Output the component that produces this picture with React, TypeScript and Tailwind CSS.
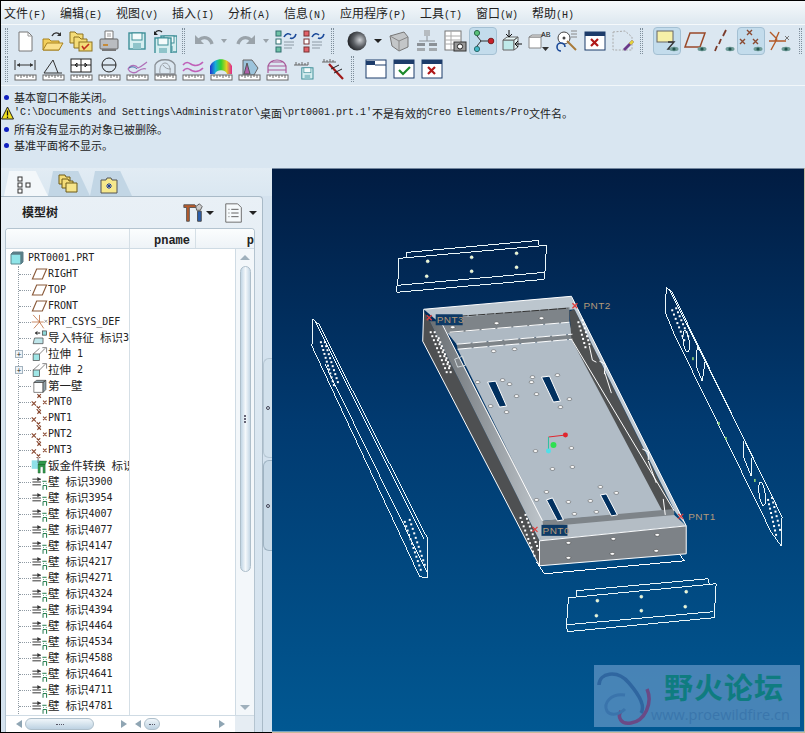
import React from "react";

const cjk = '"Noto Sans CJK SC", "Liberation Sans", sans-serif';

// CJK and latin have different sizes in the original UI, so split the strings up
const Mix = ({ text, cjkClass = "text-[12px]", latinClass = "font-['Liberation_Mono',monospace]" }: { text: string; cjkClass?: string; latinClass?: string }) => {
  const parts = text.match(/[\u2E80-\u9FFF]+|[^\u2E80-\u9FFF]+/g) || [];
  return (
    <>
      {parts.map((p, i) =>
        /[\u2E80-\u9FFF]/.test(p) ? (
          <span key={i} className={`${cjkClass} font-['Noto_Sans_CJK_SC',sans-serif]`}>{p}</span>
        ) : (
          <span key={i} className={`text-[10px] whitespace-pre ${latinClass}`}>{p}</span>
        )
      )}
    </>
  );
};

const treeLatin = "font-['DejaVu_Sans_Mono',monospace]";

const Svg = ({ children, s = 24 }: { children: React.ReactNode; s?: number }) => (
  <svg width={s} height={s} viewBox="0 0 24 24" fill="none">{children}</svg>
);

const Eye = () => (
  <g>
    <ellipse cx="19" cy="20" rx="4.5" ry="2.2" fill="#6d9a96" />
    <circle cx="19" cy="20" r="1.6" fill="#24544f" />
  </g>
);

const Ruler = () => (
  <g>
    <rect x="2" y="18" width="21" height="5" fill="#fff" stroke="#666" />
    <path d="M5 18v2M8 18v3M11 18v2M14 18v3M17 18v2M20 18v3" stroke="#666" />
  </g>
);

const Floppy = ({ x = 0, y = 0 }: { x?: number; y?: number }) => (
  <g transform={`translate(${x} ${y})`}>
    <rect x="4" y="4" width="16" height="16" fill="#d6eef0" stroke="#3e8f98" strokeWidth="1.4" />
    <rect x="7" y="4" width="10" height="7" fill="#f4fbfb" stroke="#3e8f98" />
    <rect x="8" y="14" width="8" height="6" fill="#8fc4ca" />
  </g>
);

const Folder = ({ x = 0, y = 0, w = 16 }: { x?: number; y?: number; w?: number }) => (
  <path d={`M${x} ${y + 2}h5l2 2h${w - 7}v9h-${w}z`} fill="#f4dc78" stroke="#8d7320" />
);

const icons: Record<string, React.ReactNode> = {
  page: <Svg><path d="M6 3h9l4 4v15H6z" fill="#fff" stroke="#777" /><path d="M15 3v4h4" stroke="#999" /></Svg>,
  open: <Svg><path d="M2 10h6l2 2h8v9H2z" fill="#f3cf5c" stroke="#a8821f" /><path d="M2 21l4-7h16l-4 7z" fill="#fae08c" stroke="#a8821f" /><path d="M11 7c2-4 6-4 8-1" stroke="#333" strokeWidth="1.4" /><path d="M20 3v4h-4z" fill="#333" /></Svg>,
  manage: <Svg><Folder x={1} y={1} w={13} /><Folder x={5} y={6} w={13} /><rect x="10" y="13" width="13" height="9" fill="#f4dc78" stroke="#8d7320" /><path d="M13 17l2 3 5-5" stroke="#c03020" strokeWidth="1.6" /></Svg>,
  print: <Svg><path d="M8 2h8v8H8z" fill="#fff" stroke="#777" /><path d="M10 5h4M10 7h4" stroke="#999" /><rect x="3" y="10" width="18" height="10" rx="1" fill="#b9bcc0" stroke="#666" /><rect x="6" y="15" width="5" height="2" fill="#c58b3a" /><path d="M5 20h14v2H5z" fill="#777" /></Svg>,
  save: <Svg><Floppy /></Svg>,
  saveas: <Svg><Floppy x={4} y={3} /><Floppy x={-2} y={5} /><path d="M2 4c2-3 5-3 7-1" stroke="#222" strokeWidth="1.3" /><path d="M1 2v4h4z" fill="#222" /></Svg>,
  undo: <Svg><path d="M7 11c4-4 11-3 13 4" stroke="#9aa3aa" strokeWidth="3.4" /><path d="M3 6v9h9z" fill="#9aa3aa" /></Svg>,
  redo: <Svg><path d="M17 11c-4-4-11-3-13 4" stroke="#9aa3aa" strokeWidth="3.4" /><path d="M21 6v9h-9z" fill="#9aa3aa" /></Svg>,
  regen1: <Svg><rect x="2" y="2" width="5" height="5" fill="#6fc1a6" stroke="#2f6f6f" /><rect x="2" y="10" width="5" height="5" fill="#fff" stroke="#2f6f6f" /><rect x="2" y="18" width="5" height="5" fill="#6fc1a6" stroke="#2f6f6f" /><path d="M10 13h10M10 16h10M10 19h8" stroke="#8d9aa5" /><path d="M10 8c2-4 5-4 7-2M22 5c-1 4-4 5-6 4" stroke="#1b4a9a" strokeWidth="1.6" /></Svg>,
  regen2: <Svg><rect x="2" y="2" width="5" height="5" fill="#e2626a" stroke="#7a3030" /><rect x="2" y="10" width="5" height="5" fill="#fff" stroke="#7a3030" /><rect x="2" y="18" width="5" height="5" fill="#e2626a" stroke="#7a3030" /><path d="M10 13h10M10 16h10M10 19h8" stroke="#8d9aa5" /><path d="M10 8c2-4 5-4 7-2M22 5c-1 4-4 5-6 4" stroke="#1b4a9a" strokeWidth="1.6" /></Svg>,
  sphere: <Svg><defs><radialGradient id="sph" cx="0.65" cy="0.45" r="0.7"><stop offset="0" stopColor="#cfd2d6" /><stop offset="0.5" stopColor="#5b5f64" /><stop offset="1" stopColor="#16181b" /></radialGradient></defs><circle cx="12" cy="12" r="9.5" fill="url(#sph)" /></Svg>,
  viewbox: <Svg><path d="M3 7l14-4 4 5v10l-9 4-7-5z" fill="#c3c6c8" stroke="#777" /><path d="M3 7l9 5v10M12 12l9-4" stroke="#888" /></Svg>,
  layers: <Svg><rect x="9" y="1" width="6" height="6" fill="#b6bcc1" /><path d="M12 7v5M4 12h16" stroke="#8b9197" /><rect x="2" y="14" width="8" height="3" fill="#8b9197" /><rect x="14" y="14" width="8" height="3" fill="#8b9197" /><rect x="2" y="19" width="8" height="3" fill="#a3a9ae" /><rect x="14" y="19" width="8" height="3" fill="#a3a9ae" /></Svg>,
  table: <Svg><rect x="2" y="2" width="16" height="19" fill="#fff" stroke="#777" /><path d="M2 7h16M2 11h16M2 15h16M8 2v19" stroke="#aaa" /><rect x="11" y="13" width="12" height="9" fill="#999" stroke="#333" /><circle cx="17" cy="17.5" r="2.6" fill="#fff" stroke="#222" /></Svg>,
  nodes: <Svg><circle cx="6" cy="4" r="2.6" fill="#58c078" stroke="#2a6a4a" /><circle cx="6" cy="20" r="2.6" fill="#45b8c8" stroke="#2a6a6a" /><circle cx="20" cy="12" r="2.8" fill="#c8202a" stroke="#7a2020" /><path d="M6 7l4 5-4 5M10 12h7" stroke="#333" /></Svg>,
  extrude: <Svg><path d="M4 11h11v10H4z" fill="#bfeaea" stroke="#666" /><path d="M4 11l4-3h11l-4 3zM15 11l4-3v10l-4 3z" fill="#e6f6f6" stroke="#666" /><path d="M10 1v7M7 5l3 3 3-3M23 15h-7M19 12l-3 3 3 3" stroke="#111" /></Svg>,
  annot: <Svg><path d="M2 8h12v11H2z" fill="#fff" stroke="#888" /><path d="M2 8l3-2h12l-3 2z" fill="#eee" stroke="#888" /><text x="14" y="8" fontSize="8" fill="#222" fontFamily="Liberation Mono">AB</text><path d="M15 18h7l-3.500 4z" fill="#333" /></Svg>,
  find: <Svg><circle cx="9" cy="9" r="6" fill="#fff" stroke="#444" /><circle cx="9" cy="9" r="1.5" fill="#444" /><path d="M12 12l9 9" stroke="#a87a3a" strokeWidth="2" /><path d="M16 2h6M16 5h6M16 8h6" stroke="#888" /><path d="M6 22a4 4 0 1 1 4-4" stroke="#1b4a9a" strokeWidth="1.6" /></Svg>,
  winx: <Svg><rect x="2" y="3" width="20" height="18" fill="#fff" stroke="#1d3c6a" /><rect x="2" y="3" width="20" height="4" fill="#1d3c6a" /><path d="M8 10l7 7M15 10l-7 7" stroke="#b01818" strokeWidth="2.2" /></Svg>,
  brush: <Svg><path d="M2 3l12-1 7 6v13H2z" fill="none" stroke="#aaa" strokeDasharray="2 1.500" /><path d="M12 20l9-9 2 2-9 9z" fill="#6a3a8a" /><path d="M18 14l3-3 2 2-3 3z" fill="#e2d23a" /></Svg>,
  plane: <Svg><rect x="2" y="2" width="16" height="11" fill="#f6f0a8" stroke="#666" /><path d="M13 13h6l-6 7h6" stroke="#333" strokeWidth="1.4" /><Eye /></Svg>,
  planeoff: <Svg><path d="M7 4h15l-5 14H2z" stroke="#9a4a2a" strokeWidth="1.5" /><Eye /></Svg>,
  axis: <Svg><path d="M15 1l-3 6M10 10l-2 5M6 17l-2 5" stroke="#7a3a2a" strokeWidth="1.8" /><Eye /></Svg>,
  points: <Svg><path d="M8 1l5 5M13 1L8 6M1 10l5 5M6 10l-5 5M14 10l5 5M19 10l-5 5" stroke="#8a4a32" strokeWidth="1.400" /><Eye /></Svg>,
  csys: <Svg><path d="M3 3l7 7M12 3l-4 9M2 12h17M10 10l-6 11" stroke="#b45a28" strokeWidth="1.4" /><path d="M18 7l4 4M22 7l-4 4" stroke="#777" /><Eye /></Svg>,
  m1: <Svg><path d="M2 3v10M22 3v10M4 8h16" stroke="#333" /><path d="M4 8l3-2v4zM20 8l-3-2v4z" fill="#333" /><Ruler /></Svg>,
  m2: <Svg><path d="M12 3L3 16h18M12 3l5 13" stroke="#333" /><Ruler /></Svg>,
  m3: <Svg><rect x="2" y="2" width="20" height="13" fill="#fff" stroke="#222" /><path d="M2 8h20M12 2v13M6 8l2-2v4zM18 8l-2-2v4z" stroke="#222" /><Ruler /></Svg>,
  m4: <Svg><circle cx="12" cy="8" r="7" stroke="#222" /><path d="M5 8h14" stroke="#222" /><Ruler /></Svg>,
  m5: <Svg><path d="M3 12c3-5 8-4 10-1 3-1 6-4 9-6M3 12c2 4 7 5 10 2 3-2 6-3 8-2" stroke="#b070b8" strokeWidth="1.3" /><path d="M4 11c3-2 6-1 8 1" stroke="#3a6fa8" /><Ruler /></Svg>,
  m6: <Svg><path d="M2 17V8c3-7 17-7 20 0v9z" stroke="#8a9096" strokeWidth="1.3" /><path d="M7 16c-1-6 2-10 5-10s6 4 5 10M10 8c2 3 4 4 8 4" stroke="#9aa0a6" /><Ruler /></Svg>,
  m7: <Svg><path d="M2 8c4-5 7-1 10 0s6 1 10-3M2 14c4-5 7-1 10 0s6 1 10-3" stroke="#c060b8" strokeWidth="1.6" /><Ruler /></Svg>,
  m8: <Svg><defs><linearGradient id="rb" x1="0" x2="1"><stop offset="0" stopColor="#2030d0" /><stop offset="0.25" stopColor="#18b0d8" /><stop offset="0.5" stopColor="#30d030" /><stop offset="0.75" stopColor="#e0d020" /><stop offset="1" stopColor="#e02090" /></linearGradient></defs><path d="M1 17V9C5 0 19 0 23 9v8h-5c-1-5-11-5-12 0z" fill="url(#rb)" /><Ruler /></Svg>,
  m9: <Svg><path d="M6 3h9l6 8-4 7H6z" fill="#9cc4dc" stroke="#666" /><path d="M7 17l3-11 3 11z" fill="#b060a8" stroke="#555" /><Ruler /></Svg>,
  m10: <Svg><path d="M3 16V9c3-8 15-8 18 0v7M3 9h18M3 13h18M6 5h12" stroke="#a85898" strokeWidth="1.2" /><Ruler /></Svg>,
  m11: <Svg><path d="M1 8h14M3 5v3M6 6v2M9 5v3M12 6v2M15 5v3" stroke="#666" /><g transform="translate(6 8) scale(.7)"><Floppy /></g></Svg>,
  m12: <Svg><path d="M1 5h14M3 2v3M6 3v2M9 2v3M12 3v2" stroke="#666" /><path d="M8 7l14 15" stroke="#a01818" strokeWidth="2.2" /><path d="M10 12l8-4M13 16l8-4" stroke="#222" /></Svg>,
  w1: <Svg><rect x="2" y="3" width="20" height="18" fill="#fff" stroke="#1d3c6a" /><path d="M2 4h9v4H2z" fill="#1d3c6a" /><path d="M11 8h11" stroke="#1d3c6a" /></Svg>,
  w2: <Svg><rect x="2" y="3" width="20" height="18" fill="#fff" stroke="#1d3c6a" /><rect x="2" y="3" width="20" height="4" fill="#1d3c6a" /><path d="M7 13l4 4 7-7" stroke="#1a8a2a" strokeWidth="2.2" /></Svg>,
};

const Drop = () => <div className="w-3 flex justify-center"><div className="border-x-[3px] border-t-[4px] border-x-transparent border-t-[#9aa3aa]" /></div>;
const DarkDrop = ({ className = "" }: { className?: string }) => <div className={`border-x-[4px] border-t-[4px] border-x-transparent border-t-[#222] ${className}`} />;
const Grip = () => <div className="w-[3px] h-[26px] mx-[3px] border-x border-dotted border-[#7f8f9c]" />;

const Tool = ({ name, on }: { name: string; on?: boolean }) => (
  <div className={`w-7 h-7 flex items-center justify-center shrink-0 rounded-sm ${on ? "bg-[#c3dcec] border border-[#a4c0d3]" : ""}`}>{icons[name]}</div>
);

const menus = [
  { t: "文件(F)", w: "w-[56px]" },
  { t: "编辑(E)", w: "w-[56px]" },
  { t: "视图(V)", w: "w-[56px]" },
  { t: "插入(I)", w: "w-[56px]" },
  { t: "分析(A)", w: "w-[56px]" },
  { t: "信息(N)", w: "w-[56px]" },
  { t: "应用程序(P)", w: "w-[80px]" },
  { t: "工具(T)", w: "w-[56px]" },
  { t: "窗口(W)", w: "w-[56px]" },
  { t: "帮助(H)", w: "w-[56px]" },
];

const messages = [
  { kind: "info", t: "基本窗口不能关闭。" },
  { kind: "warn", t: "'C:\\Documents and Settings\\Administrator\\桌面\\prt0001.prt.1'不是有效的Creo Elements/Pro文件名。" },
  { kind: "info", t: "所有没有显示的对象已被删除。" },
  { kind: "info", t: "基准平面将不显示。" },
];

const PlaneIcon = () => <Svg s={18}><path d="M8 5h14l-6 14H2z" stroke="#8a5a3a" strokeWidth="1.6" /></Svg>;
const CsysIcon = () => <Svg s={18}><path d="M3 2l9 10M12 2v10M1 12h17M12 12l-8 9M12 12l6 9" stroke="#b45a28" /><path d="M19 9l4 4M23 9l-4 4" stroke="#777" /></Svg>;
const ImportIcon = () => <Svg s={18}><path d="M5 12h12v8H3z" fill="#bfe6ea" stroke="#444" /><rect x="16" y="2" width="6" height="6" fill="#8fd8d8" stroke="#444" /><path d="M13 5H7M9 3L6 5l3 2" stroke="#111" strokeWidth="1.4" /></Svg>;
const ExtrudeIcon = () => <Svg s={18}><rect x="3" y="12" width="9" height="9" fill="#9fe6e6" stroke="#444" /><path d="M12 12l8-8M16 3h6v7M3 12l9-8" stroke="#555" /></Svg>;
const SolidIcon = () => <Svg s={18}><path d="M4 7h13v14H4z" fill="#fff" stroke="#555" /><path d="M4 7l4-3h13l-4 3zM17 7l4-3v13l-4 4z" fill="#8ea0a8" stroke="#444" /></Svg>;
const PointsIcon = () => <Svg s={18}><path d="M9 1l5 5M14 1L9 6M1 11l6 6M7 11l-6 6M17 10l5 5M22 10l-5 5M8 18l5 5M13 18l-5 5" stroke="#8a4a32" strokeWidth="1.6" /></Svg>;
const SheetIcon = () => <Svg s={18}><path d="M1 4h12v12H1z" fill="#8fe0e8" /><path d="M10 10l2-5h10l-2 5zM10 10v12h3V13h4v9h3V10z" fill="#2f9a4a" stroke="#1c5c2c" strokeWidth=".6" /><path d="M10 0v8" stroke="#333" /></Svg>;
const WallIcon = () => <Svg s={18}><path d="M2 8h12M2 12h12M2 16h12" stroke="#333" strokeWidth="1.400" /><path d="M9 5l5 3-5 3z" fill="#333" /><path d="M16 11h6M17 14h1M21 14h1M17 17h5v6M17 17v6" stroke="#1f7a4a" strokeWidth="1.400" /></Svg>;

const walls = ["3900", "3954", "4007", "4077", "4147", "4217", "4271", "4324", "4394", "4464", "4534", "4588", "4641", "4711", "4781"];

const rows: { t: string; icon: React.ReactNode; plus?: boolean }[] = [
  { t: "RIGHT", icon: <PlaneIcon /> },
  { t: "TOP", icon: <PlaneIcon /> },
  { t: "FRONT", icon: <PlaneIcon /> },
  { t: "PRT_CSYS_DEF", icon: <CsysIcon /> },
  { t: "导入特征 标识39", icon: <ImportIcon /> },
  { t: "拉伸 1", icon: <ExtrudeIcon />, plus: true },
  { t: "拉伸 2", icon: <ExtrudeIcon />, plus: true },
  { t: "第一壁", icon: <SolidIcon /> },
  { t: "PNT0", icon: <PointsIcon /> },
  { t: "PNT1", icon: <PointsIcon /> },
  { t: "PNT2", icon: <PointsIcon /> },
  { t: "PNT3", icon: <PointsIcon /> },
  { t: "钣金件转换 标识", icon: <SheetIcon /> },
  ...walls.map((w) => ({ t: "壁 标识" + w, icon: <WallIcon /> })),
];

const ArrowL = () => <div className="border-y-[4px] border-r-[6px] border-y-transparent border-r-[#8fa5b3]" />;
const ArrowR = () => <div className="border-y-[4px] border-l-[6px] border-y-transparent border-l-[#8fa5b3]" />;

const line = (x1: number, y1: number, x2: number, y2: number, n: number) =>
  Array.from({ length: n }, (_, i) => [x1 + ((x2 - x1) * i) / (n - 1), y1 + ((y2 - y1) * i) / (n - 1)]);

const floorHoles = [[494, 352], [515, 350], [478, 383], [503, 381], [510, 385], [533, 378], [532, 383], [558, 376], [517, 397], [537, 395], [570, 400], [561, 408], [507, 413], [491, 407], [536, 452], [572, 449], [553, 470], [573, 468], [547, 493], [537, 501], [569, 503], [591, 502], [601, 488], [617, 494], [575, 515], [597, 513], [497, 324], [542, 319], [453, 328], [569, 544], [614, 540], [658, 536], [569, 559], [613, 555], [657, 552]];

const perf = [
  ...line(430, 332, 446, 372, 11), ...line(434, 332, 450, 372, 11), ...line(438, 338, 449, 366, 8),
  ...line(520, 518, 534, 556, 10), ...line(525, 515, 538, 550, 10),
  ...line(578, 322, 585, 347, 7), ...line(582, 320, 589, 344, 7),
  ...line(320, 342, 333, 385, 12), ...line(324, 342, 337, 382, 11),
  ...line(404, 522, 420, 570, 12), ...line(409, 520, 424, 565, 11),
  ...line(672, 310, 684, 340, 8), ...line(676, 308, 688, 336, 8),
  ...line(768, 500, 776, 535, 9), ...line(772, 498, 780, 530, 8),
];

const Viewport = () => (
  <svg viewBox="272 169 533 564" className="block w-full h-full">
    <defs>
      <linearGradient id="vp" x1="0" x2="0" y1="0" y2="1">
        <stop offset="0" stopColor="#011c42" />
        <stop offset="0.45" stopColor="#013a70" />
        <stop offset="1" stopColor="#015892" />
      </linearGradient>
      <linearGradient id="bevel" x1="0" x2="1" y1="0" y2="0">
        <stop offset="0" stopColor="#6a6f73" />
        <stop offset="1" stopColor="#c0c7cd" />
      </linearGradient>
    </defs>
    <rect x="272" y="169" width="533" height="564" fill="url(#vp)" />

    {/* floating plates */}
    <g stroke="#eaf6f8" fill="none" shapeRendering="crispEdges">
      <path d="M399 259L547 246L545 280L397 293L397 287L398 286L399 259M398 286L545 273M407 258L407 253L539 241L539 246" />
      <path d="M569 599L717 585L715 619L568 633L567 627L569 599M568 626L714 613M577 597L577 592L709 580L710 585" />
      <path d="M313 320L319 325L428 540L428 579L420 578L312 347ZM315 322L424 540M325 365L428 575" />
      <path d="M667 288L673 293L783 518L782 547L772 533L675 335L666 313ZM670 290L778 507" />
      <path d="M698 347L706 362L703 382L697 367ZM745 440L753 457L752 477L744 457Z" />
      <ellipse cx="687" cy="342" rx="3" ry="11" transform="rotate(-8 687 342)" />
      <ellipse cx="763" cy="495" rx="3" ry="12" transform="rotate(-8 763 495)" />
    </g>

    {/* tray */}
    <polygon points="424,312 423,342 540,567 540,542 430,322" fill="#4e5052" />
    <polygon points="430,322 540,542 547,526 441,322" fill="url(#bevel)" />
    <polygon points="424,310 572,297 576,310 438,322" fill="#bcc6ce" />
    <polygon points="440,320 570,308 570,323 448,335" fill="#7e8489" />
    <polygon points="448,334 570,323 573,335 457,345" fill="#aeb9c3" />
    <polygon points="457,345 573,335 573,340 458,350" fill="#7e8489" />
    <polygon points="458,350 572,340 675,512 543,522" fill="#b1bcc6" />
    <polygon points="570,312 575,310 675,512 663,512 572,340" fill="#4f5152" />
    <polygon points="572,297 687,527 676,513 575,310" fill="#c3ccd4" />
    <polygon points="543,522 675,510 675,517 544,530" fill="#7e8489" />
    <polygon points="544,528 675,516 687,527 540,542" fill="#b4bdc5" />
    <polygon points="540,542 687,527 687,555 540,567" fill="#7d8287" />
    <g stroke="#fff" fill="none">
      <path d="M424 310L572 297L687 527L687 555L540 567L423 342L424 310M540 542L687 527M540 542L540 567M441 322L543 522M572 340L675 512" strokeWidth="1" />
      <path d="M450 333L570 323M457 345L573 335M458 350L573 340" strokeDasharray="14 2" />
      <path d="M460 317L568 309" stroke="#333" strokeDasharray="8 1" />
      <path d="M590 347l3 14 4 2M600 362l6 3-1 10M605 372l7 22M643 450l6 3 0 8M649 462l8 22M664 500l2 16" />
      <path d="M537 563L545 575L685 562L680 555" shapeRendering="crispEdges" />
      <path d="M455 360l8-3 3 9-8 2z" stroke="#d0d8dc" />
    </g>

    {/* slots */}
    <g fill="#01305f" stroke="#fff">
      <polygon points="488,383 496,382 507,407 500,408" />
      <polygon points="542,378 550,377 561,402 554,403" />
      <polygon points="547,501 553,499 564,521 558,522" />
      <polygon points="601,496 607,495 618,516 612,517" />
    </g>

    {floorHoles.map(([x, y], i) => <ellipse key={i} cx={x} cy={y} rx="2.4" ry="1.4" fill="#fff" stroke="#222" strokeWidth=".4" />)}
    {perf.map(([x, y], i) => <rect key={i} x={x} y={y} width="2" height="2" fill="#fff" />)}

    {[[428, 262], [472, 258], [517, 254], [427, 277], [472, 272], [517, 268], [598, 602], [642, 598], [687, 593], [597, 617], [642, 612], [686, 608]].map(([x, y], i) => (
      <circle key={i} cx={x} cy={y} r="1.5" fill="#e8f8c8" stroke="#fff" strokeWidth=".5" />
    ))}
    {[[693, 358], [719, 423], [726, 438], [755, 480]].map(([x, y], i) => <rect key={i} x={x} y={y} width="1.500" height="3" fill="#9fe87a" />)}

    {/* coordinate triad */}
    <path d="M549 438L566 436" stroke="#e0262e" />
    <path d="M549 438V452" stroke="#30c0a0" />
    <circle cx="566" cy="436" r="2.500" fill="#e0262e" />
    <circle cx="554" cy="446" r="3" fill="#30e050" />
    <circle cx="549" cy="452" r="2.500" fill="#50e0e8" />

    {/* point labels */}
    <rect x="436" y="315" width="27" height="11" fill="#0e3a66" />
    <rect x="542" y="526" width="26" height="11" fill="#0e3a66" />
    <g stroke="#e0403f" strokeWidth="1.300">
      <path d="M427 316l5 5M432 316l-5 5" />
      <path d="M573 304l5 5M578 304l-5 5" />
      <path d="M679 515l5 5M684 515l-5 5" />
      <path d="M533 528l5 5M538 528l-5 5" />
    </g>
    <g fill="#b49a7a" fontSize="10" fontFamily="Liberation Sans" letterSpacing="0.5">
      <text x="437" y="324">PNT3</text>
      <text x="584" y="310">PNT2</text>
      <text x="689" y="521">PNT1</text>
      <text x="543" y="535">PNT0</text>
    </g>
  </svg>
);

const App: React.FC = () => {
  return (
    <div className="w-[805px] h-[733px] flex flex-col overflow-hidden border-t border-l border-black bg-[#d9e6f1] text-[#222]" style={{ fontFamily: cjk }}>
      {/* menu */}
      <div className="h-6 shrink-0 flex items-center pl-[3px] pb-[2px] bg-gradient-to-b from-[#f6f9fb] to-[#dde8f0] border-b border-[#f5f9fb]">
        {menus.map((m) => (
          <div key={m.t} className={`${m.w} shrink-0 leading-none`}><Mix text={m.t} /></div>
        ))}
      </div>

      {/* toolbars */}
      <div className="h-[61px] shrink-0 pl-[1px] pt-[2px] bg-[#dbe7f1] border-b border-[#f2f7fa] flex flex-col">
        <div className="flex items-center h-7">
          <Grip />
          <Tool name="page" /><Tool name="open" /><Tool name="manage" /><Tool name="print" /><Tool name="save" /><Tool name="saveas" />
          <Grip />
          <div className="w-[2px]" />
          <Tool name="undo" /><Drop /><div className="w-[2px]" /><Tool name="redo" /><Drop />
          <Tool name="regen1" /><Tool name="regen2" />
          <Grip />
          <div className="w-[6px]" />
          <Tool name="sphere" /><div className="w-[14px] flex justify-center"><DarkDrop /></div>
          <Tool name="viewbox" /><Tool name="layers" /><Tool name="table" /><Tool name="nodes" on /><Tool name="extrude" /><Tool name="annot" /><Tool name="find" /><Tool name="winx" /><Tool name="brush" />
          <Grip />
          <div className="w-[7px]" />
          <Tool name="plane" on /><Tool name="planeoff" /><Tool name="axis" /><Tool name="points" on /><Tool name="csys" />
          <div className="w-[3px]" />
          <Grip />
        </div>
        <div className="flex items-center h-7">
          <Grip />
          {["m1", "m2", "m3", "m4", "m5", "m6", "m7", "m8", "m9", "m10", "m11", "m12"].map((n) => <Tool key={n} name={n} />)}
          <div className="w-[1px]" />
          <Grip />
          <div className="w-[5px]" />
          <Tool name="w1" /><Tool name="w2" /><Tool name="winx" />
        </div>
      </div>

      {/* messages */}
      <div className="h-[82px] shrink-0 pt-[3px] bg-[#d9e6f1]">
        {messages.map((m, i) => (
          <div key={i} className="h-4 flex items-center whitespace-nowrap leading-none">
            <div className="w-[13px] shrink-0 flex justify-center">
              {m.kind === "info" ? (
                <div className="w-[5px] h-[5px] rounded-full bg-[#1020c0] -ml-[3px]" />
              ) : (
                <svg width="13" height="14" viewBox="0 0 13 14"><path d="M6.500 1L12.500 13H.5z" fill="#f2e020" stroke="#222" /><path d="M6.500 4.500v5M6.500 10.500v1.500" stroke="#111" strokeWidth="1.300" /></svg>
              )}
            </div>
            <Mix text={m.t} cjkClass="text-[11px]" />
          </div>
        ))}
      </div>

      {/* body */}
      <div className="flex-1 flex min-h-0">
        <div className="w-[271px] shrink-0 flex flex-col bg-[#d4e2ee] border-b border-black">
          <div className="h-7 shrink-0 flex items-end pl-[3px] bg-gradient-to-b from-[#e2ecf4] to-[#dae7f1]">
            <div className="w-[44px] h-[25px] flex items-center pl-[13px] pt-[3px] bg-[#f3f7fa] [clip-path:polygon(12%_0,72%_0,100%_100%,0_100%)]">
              <svg width="16" height="18" viewBox="0 0 16 18" fill="#fff" stroke="#333"><rect x="1" y="1" width="4" height="4" /><rect x="1" y="7" width="4" height="4" /><rect x="1" y="13" width="4" height="4" /><rect x="9" y="7" width="4" height="4" /></svg>
            </div>
            <div className="w-[42px] h-[25px] flex items-center pl-[10px] pt-[1px] bg-[#c2d6e5] [clip-path:polygon(12%_0,72%_0,100%_100%,0_100%)]">
              <svg width="20" height="20" viewBox="0 0 20 20"><path d="M1 1h6l1 2h4v7H1z" fill="#f4dc78" stroke="#6d5a18" /><path d="M4 5h6l1 2h4v7H4z" fill="#f4dc78" stroke="#6d5a18" /><path d="M8 9h11v9H8z" fill="#f6e48a" stroke="#6d5a18" /></svg>
            </div>
            <div className="w-[42px] h-[25px] flex items-center pl-[10px] pt-[3px] bg-[#c2d6e5] [clip-path:polygon(12%_0,72%_0,100%_100%,0_100%)]">
              <svg width="18" height="18" viewBox="0 0 18 18"><path d="M1 4h5l1-2h4l1 2h5v13H1z" fill="#f6e88c" stroke="#555" /><path d="M6 10l6 0M9 7v6M7 8l4 4M11 8l-4 4" stroke="#1b3a9a" /></svg>
            </div>
          </div>

          <div className="flex-1 min-h-0 flex">
            <div className="w-[262px] shrink-0 flex flex-col pl-[4px] rounded-tr border-t border-r border-[#a9bac7] bg-gradient-to-b from-[#e9f0f6] via-[#d9e6f0] to-[#d4e2ee]">
              <div className="h-[31px] shrink-0 flex items-center">
                <div className="ml-[17px] mb-[2px] w-[160px] font-bold text-[12px] leading-none">模型树</div>
                <Svg s={22}><path d="M2 3h12l3 3H8v15H5V6H2z" fill="#b85a2a" stroke="#555" /><path d="M17 10h4v11h-4z" fill="#2a5fb0" stroke="#444" /><path d="M15 5l4-3 3 3-2 4h-4z" fill="#ccc" stroke="#555" /></Svg>
                <DarkDrop className="ml-[2px]" />
                <div className="ml-[9px]"><Svg s={22}><path d="M3 2h13l4 4v16H3z" fill="#f6fafc" stroke="#666" /><path d="M6 8h1M6 12h1M6 16h1M9 8h8M9 12h8M9 16h8" stroke="#555" /></Svg></div>
                <DarkDrop className="ml-[4px]" />
              </div>

              <div className="flex-1 min-h-0 w-[250px] flex flex-col rounded-t border-x border-t border-[#b4c4d0] bg-white overflow-hidden">
                <div className="h-5 shrink-0 flex border-b border-[#cfdbe4] bg-gradient-to-b from-[#fbfdfe] to-[#eef3f7]">
                  <div className="w-[124px] shrink-0 border-r border-[#d5dfe6]" />
                  <div className="w-[66px] shrink-0 border-r border-[#d5dfe6] pr-[5px] text-right text-[12px] font-bold leading-6 font-['Liberation_Mono',monospace]">pname</div>
                  <div className="flex-1 overflow-hidden text-right text-[12px] font-bold leading-6 font-['Liberation_Mono',monospace]">p</div>
                </div>

                <div className="flex-1 min-h-0 flex">
                  <div className="w-[229px] shrink-0 flex flex-col">
                    <div className="flex-1 min-h-0 flex">
                      <div className="w-[124px] shrink-0 pt-[1px] border-r border-[#d5dfe6] overflow-hidden">
                        <div className="h-4 flex items-center pl-[4px] whitespace-nowrap leading-none">
                          <svg width="15" height="14" viewBox="0 0 15 14" className="mr-[3px]"><path d="M1 3h10v10H1z" fill="#8fe4e8" stroke="#5a8a90" /><path d="M1 3l2-2h10l-2 2zM11 3l2-2v10l-2 2z" fill="#5a7f88" stroke="#5a7f88" /></svg>
                          <Mix text="PRT0001.PRT" latinClass={treeLatin} />
                        </div>
                        <div className="ml-[12px] border-l border-dotted border-[#8f9aa3]">
                          {rows.map((r) => (
                            <div key={r.t} className="relative h-4 flex items-center whitespace-nowrap leading-none">
                              <div className="w-3 shrink-0 border-t border-dotted border-[#8f9aa3]" />
                              {r.plus && (
                                <div className="absolute -left-[4px] top-[4px] w-[8px] h-[8px] flex items-center justify-center bg-[#eef3f7] border border-[#a3b3bf] text-[8px] leading-none">+</div>
                              )}
                              <div className="w-[17px] shrink-0 flex justify-center">{r.icon}</div>
                              <Mix text={r.t} cjkClass="text-[11.5px]" latinClass={treeLatin} />
                            </div>
                          ))}
                        </div>
                      </div>
                      <div className="flex-1" />
                    </div>
                  </div>
                  <div className="flex-1 border-l border-[#cfdbe4] bg-[#f3f7fa] flex flex-col items-center pt-[6px]">
                    <div className="border-x-[5px] border-b-[5px] border-x-transparent border-b-[#9fb0bc]" />
                    <div className="mt-[6px] w-[11px] h-[306px] rounded-full border border-[#aebfcb] bg-gradient-to-r from-[#c2d6e5] via-[#f4f8fb] to-[#c6d8e6] flex items-center justify-center">
                      <div className="h-[8px] border-l-2 border-dotted border-[#667]" />
                    </div>
                    <div className="mt-auto mb-[5px] border-x-[5px] border-t-[5px] border-x-transparent border-t-[#9fb0bc]" />
                  </div>
                </div>

                <div className="h-[17px] shrink-0 flex items-center border-t border-[#cfdbe4] bg-white">
                  <div className="w-[124px] shrink-0 flex items-center pl-[10px] pr-[3px]">
                    <ArrowL />
                    <div className="ml-[3px] w-[69px] h-[12px] rounded-full border border-[#aebfcb] bg-gradient-to-b from-[#f0f6fa] to-[#bdd2e2] flex items-center justify-center">
                      <div className="w-[8px] border-t border-dotted border-[#556]" />
                    </div>
                    <div className="ml-auto"><ArrowR /></div>
                  </div>
                  <div className="w-[105px] shrink-0 flex items-center pl-[5px] pr-[10px]">
                    <ArrowL />
                    <div className="ml-[3px] w-[16px] h-[12px] rounded-full border border-[#aebfcb] bg-gradient-to-b from-[#f0f6fa] to-[#bdd2e2] flex items-center justify-center">
                      <div className="w-[6px] border-t border-dotted border-[#556]" />
                    </div>
                    <div className="ml-auto"><ArrowR /></div>
                  </div>
                  <div className="flex-1 self-stretch bg-[#e6edf3]" />
                </div>
              </div>
            </div>

            {/* sash handles */}
            <div className="flex-1 flex flex-col pt-[162px] gap-[2px]">
              <div className="h-[100px] rounded-l-md border-y border-l border-[#b6c7d4] bg-[#d2e1ec] flex items-center justify-center">
                <div className="w-[4px] h-[4px] rounded-full border border-[#445]" />
              </div>
              <div className="h-[91px] rounded-l-md border-y border-l border-[#9fb3c2] bg-[#c8d9e6] flex items-center justify-center">
                <div className="w-[4px] h-[4px] rounded-full border border-[#445]" />
              </div>
            </div>
          </div>
        </div>

        {/* graphics window */}
        <div className="relative flex-1 min-w-0 border-r border-b border-[#c8b89a]">
          <Viewport />
          <div className="absolute left-[322px] top-[497px] w-[206px] h-[62px] bg-[#5f94c4]/75 pl-[70px]">
            <svg width="58" height="60" viewBox="0 0 58 60" className="absolute left-[1px] top-[2px]" fill="none">
              <path d="M4 18C4 6 22 2 34 16s16 24 12 30" stroke="#2f66a0" strokeWidth="3.500" />
              <path d="M52 22c6 14-2 32-16 34C26 58 22 50 26 44" stroke="#6a4a86" strokeWidth="3.500" />
              <path d="M30 28C16 26 8 36 12 44c3 5 12 4 18-2" stroke="#3a74ac" strokeWidth="3" />
            </svg>
            <div className="pt-[5px] text-[29px] leading-[32px] font-bold tracking-[1px] text-[#0f7c80] whitespace-nowrap">野火论坛</div>
            <div className="-ml-[13px] mt-[5px] text-[14.5px] leading-[16px] text-[#3a76ac] whitespace-nowrap font-['Open_Sans',sans-serif]">www.proewildfire.cn</div>
          </div>
        </div>
      </div>
    </div>
  );
};

export default App;
